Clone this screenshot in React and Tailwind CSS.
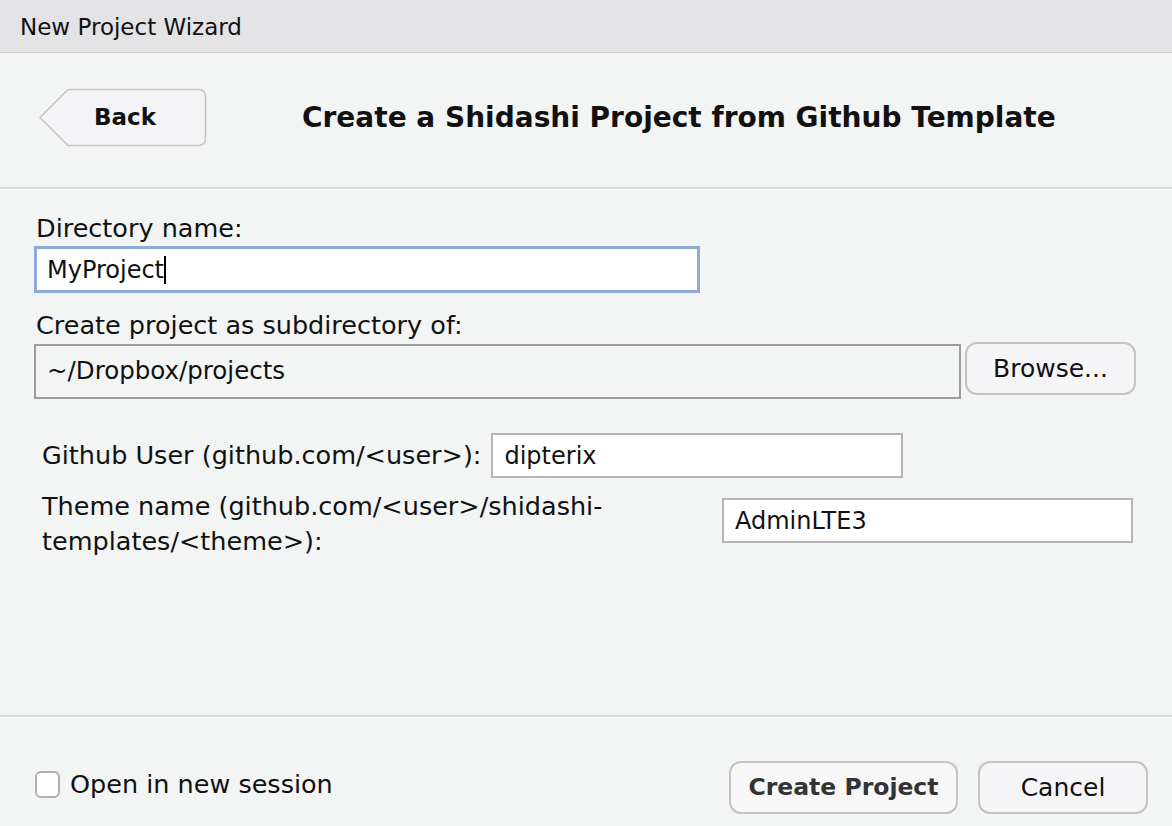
import React from "react"

const font = { fontFamily: '"DejaVu Sans", "Liberation Sans", sans-serif' }

// Back button with an arrow-shaped left edge
const BackButton = () => (
  <button className="relative w-[168px] h-[59px] text-[23px] font-bold text-[#111]">
    <svg className="absolute inset-0" width="168" height="59" viewBox="0 0 168 59">
      <path
        d="M1 29.5 L29 1.5 H159 Q166.5 1.5 166.5 9 V50 Q166.5 57.5 159 57.5 H29 Z"
        fill="#f4f4f6"
        stroke="#c4c4c4"
        strokeWidth="1.5"
      />
    </svg>
    <span className="relative pl-[4px]">Back</span>
  </button>
)

const Separator = () => (
  <div className="border-t-2 border-[#d6d7d7] border-b border-b-[#fbfbfb]" />
)

export default function App() {
  return (
    <div style={font} className="w-[1172px] h-[826px] flex flex-col bg-[#f3f4f4] text-[#111] overflow-hidden">
      {/* Title bar */}
      <div className="h-[53px] flex items-center px-[20px] pt-[3px] bg-[#e3e3e6] border-b border-[#d0d0d2] text-[23px]">
        New Project Wizard
      </div>

      {/* Header */}
      <div className="h-[134px] flex items-center pl-[39px] pb-[5px]">
        <BackButton />
        <h1 className="ml-[95px] text-[28px] font-bold">Create a Shidashi Project from Github Template</h1>
      </div>
      <Separator />

      {/* Form */}
      <div className="flex-1 flex flex-col px-[34px] pt-[24px] text-[25.5px]">
        <label className="pl-[2px] leading-[28px]">Directory name:</label>
        <div className="mt-[4px] w-[666px] h-[47px] flex items-center px-[10px] bg-white border-[3px] border-[#8eabd8] text-[24px]">
          <span>MyProject</span>
          <span className="w-[2px] h-[28px] bg-black" />
        </div>

        <label className="mt-[18px] pl-[2px] leading-[28px]">Create project as subdirectory of:</label>
        <div className="mt-[3px] flex items-start">
          <div className="mt-[2px] w-[927px] h-[55px] flex items-center px-[11px] border-2 border-[#9d9d9d] text-[24.5px]">
            ~/Dropbox/projects
          </div>
          <button className="ml-[4px] w-[171px] h-[53px] rounded-[12px] border-2 border-[#c3c3c3] bg-[#f5f5f7] text-[25px]">
            Browse...
          </button>
        </div>

        <div className="mt-[34px] flex items-center pl-[8px]">
          <span>Github User (github.com/&lt;user&gt;):</span>
          <div className="ml-[10px] w-[412px] h-[45px] flex items-center px-[11px] bg-white border-2 border-[#b5b5b5] text-[24px]">
            dipterix
          </div>
        </div>

        <div className="mt-[11px] flex items-start pl-[8px]">
          <span className="w-[680px] leading-[35px]">Theme name (github.com/&lt;user&gt;/shidashi-templates/&lt;theme&gt;):</span>
          <div className="mt-[9px] w-[411px] h-[45px] flex items-center px-[11px] bg-white border-2 border-[#b5b5b5] text-[24px]">
            AdminLTE3
          </div>
        </div>
      </div>

      <Separator />

      {/* Footer */}
      <div className="h-[108px] flex items-center pl-[35px] pr-[24px] text-[25.5px] pt-[24px]">
        <div className="flex items-center">
          <span className="w-[25px] h-[27px] rounded-[6px] border-2 border-[#b0b0b0] bg-white" />
          <span className="ml-[10px]">Open in new session</span>
        </div>
        <div className="ml-auto flex items-center gap-[20px] mt-[7px]">
          <button className="w-[229px] h-[53px] rounded-[12px] border-2 border-[#c3c3c3] bg-[#f7f7f8] font-bold text-[#333] text-[23.5px]">
            Create Project
          </button>
          <button className="w-[170px] h-[53px] rounded-[12px] border-2 border-[#c3c3c3] bg-[#f5f5f7] text-[25px]">
            Cancel
          </button>
        </div>
      </div>
    </div>
  )
}
